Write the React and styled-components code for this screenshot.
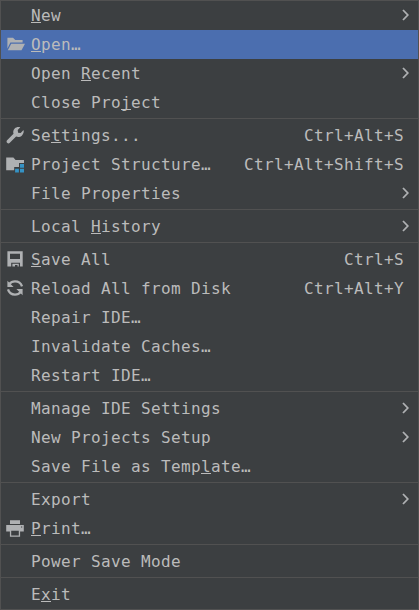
import React from "react";
import styled, { createGlobalStyle } from "styled-components";

const GlobalStyle = createGlobalStyle`
  body { margin: 0; background: #3c3f41; }
`;

const Menu = styled.nav`
  box-sizing: border-box;
  display: flex;
  flex-direction: column;
  width: 419px;
  height: 610px;
  border: 1px solid #515151;
  background: #3c3f41;
  color: #bbbbbb;
  font-family: "DejaVu Sans Mono", monospace;
  font-size: 16px;
  letter-spacing: 0.367px;
  font-variant-ligatures: none;
  cursor: default;
`;

const Item = styled.div`
  display: flex;
  align-items: center;
  height: 29px;
  padding: 0 9px 0 4px;
  line-height: 29px;
  white-space: pre;
  background: ${(p) => (p.$selected ? "#4b6eaf" : "transparent")};
`;

const IconSlot = styled.span`
  flex: none;
  width: 26px;
  height: 20px;
  margin-top: 1px;
  line-height: 0;
`;

const Icon = styled.svg`
  display: block;
  width: 20px;
  height: 20px;
  fill: #afb1b3;
`;

const Label = styled.span`
  flex: 1;
  height: 29px;
`;

const Mnemonic = styled.span`
  display: inline-block;
  height: 29px;
  vertical-align: top;
  background: linear-gradient(#bbbbbb, #bbbbbb) 0 21px / 100% 1px no-repeat;
`;

const Shortcut = styled.span`
  height: 29px;
  margin-right: 5px;
`;

const Arrow = styled.svg`
  width: 7px;
  height: 12px;
  margin-bottom: 1px;
  fill: none;
  stroke: #afb1b3;
  stroke-width: 1.8;
`;

const Separator = styled.div`
  height: 1px;
  margin: 1px 0 2px;
  background: #515151;
`;

const icons = {
  open: (
    <>
      <path d="M2.4 2.8H8L10.3 5H17.6V7.6H5.4L2.4 13.4Z" />
      <path d="M6.2 8.7H20L16.5 15.3H2.8Z" />
    </>
  ),
  wrench: (
    <path d="M18.5 4.1L15.7 7L13.1 6.7L12.7 4.1L15.3 1.3C13.4.6 11.2 1 9.7 2.5C8.2 4 7.9 6 8.5 7.8L2.1 14.2C1.4 14.9 1.4 16 2.1 16.8C2.9 17.6 4.1 17.6 4.8 16.8L11.1 10.5C13 11.3 15.4 11 17 9.4C18.5 7.9 19.1 6 18.5 4.1Z" />
  ),
  structure: (
    <>
      <path d="M1.2 2.6H8.4L10.6 5H19V8H14V12H9.2V15.2H1.2Z" />
      <path fill="#3592c4" d="M15 9H19V12.7H15ZM15 13.8H19V17.6H15ZM10.1 13.8H13.9V17.6H10.1Z" />
    </>
  ),
  save: (
    <path
      fillRule="evenodd"
      d="M2.4 1.2H17.7V16.6H15V12.7H6.2V16.6H2.4ZM5 3.8V9H15V3.8ZM7.4 13.8H13.8V16.6H12.5V15H10V16.6H7.4Z"
    />
  ),
  reload: (
    <g fill="none" stroke="#afb1b3" strokeWidth="2.3">
      <path d="M17 7.4C16 4.3 13.3 2.4 10 2.4C7.8 2.4 5.7 3.3 4.3 5" />
      <path d="M3 10.4C4 13.6 6.7 15.6 10 15.6C12.3 15.6 14.3 14.7 15.7 13" />
      <path fill="#afb1b3" stroke="none" d="M2.4 1.8V8H8.6ZM17.6 16.2V10H11.4Z" />
    </g>
  ),
  print: (
    <path
      fillRule="evenodd"
      d="M5 1.2H15V5H5ZM1.2 6H18.8V12.6H15.1V17.8H4.9V12.6H1.2ZM16 7.5V8.6H17.2V7.5ZM6.2 11.8V16.5H13.8V11.8Z"
    />
  ),
};

const groups = [
  [
    { text: "_New", sub: true },
    { text: "_Open…", icon: "open", selected: true },
    { text: "Open _Recent", sub: true },
    { text: "Close Pro_ject" },
  ],
  [
    { text: "Se_ttings...", icon: "wrench", keys: "Ctrl+Alt+S" },
    { text: "Project Structure…", icon: "structure", keys: "Ctrl+Alt+Shift+S" },
    { text: "File Properties", sub: true },
  ],
  [{ text: "Local _History", sub: true }],
  [
    { text: "_Save All", icon: "save", keys: "Ctrl+S" },
    { text: "Reload All from Disk", icon: "reload", keys: "Ctrl+Alt+Y" },
    { text: "Repair IDE…" },
    { text: "Invalidate Caches…" },
    { text: "Restart IDE…" },
  ],
  [
    { text: "Manage IDE Settings", sub: true },
    { text: "New Projects Setup", sub: true },
    { text: "Save File as Temp_late…" },
  ],
  [
    { text: "Export", sub: true },
    { text: "_Print…", icon: "print" },
  ],
  [{ text: "Power Save Mode" }],
  [{ text: "E_xit" }],
];

// An underscore in the text marks the following letter as the mnemonic.
function ItemLabel({ text }) {
  const at = text.indexOf("_");
  if (at < 0) return <Label>{text}</Label>;
  return (
    <Label>
      {text.slice(0, at)}
      <Mnemonic>{text[at + 1]}</Mnemonic>
      {text.slice(at + 2)}
    </Label>
  );
}

function MenuItem({ text, icon, keys, sub, selected }) {
  return (
    <Item $selected={selected} role="menuitem">
      <IconSlot>{icon && <Icon viewBox="0 0 20 20">{icons[icon]}</Icon>}</IconSlot>
      <ItemLabel text={text} />
      {keys && <Shortcut>{keys}</Shortcut>}
      {sub && (
        <Arrow viewBox="0 0 7 12">
          <path d="M1 1L5.8 6L1 11" />
        </Arrow>
      )}
    </Item>
  );
}

export default function App() {
  return (
    <>
      <GlobalStyle />
      <Menu role="menu">
        {groups.map((group, i) => (
          <React.Fragment key={i}>
            {i > 0 && <Separator />}
            {group.map((item) => (
              <MenuItem key={item.text} {...item} />
            ))}
          </React.Fragment>
        ))}
      </Menu>
    </>
  );
}
